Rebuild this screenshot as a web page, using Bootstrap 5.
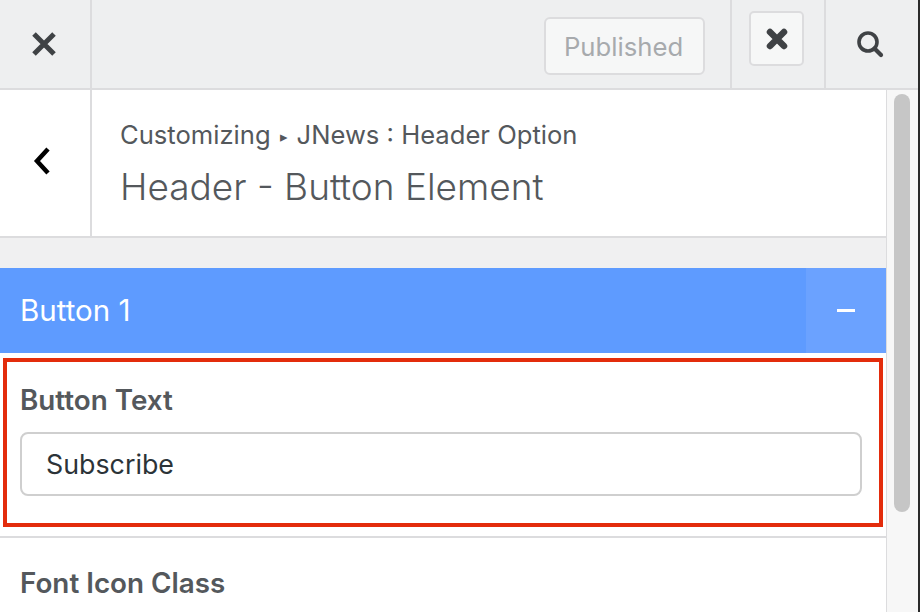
<!DOCTYPE html>
<html lang="en"><head><meta charset="utf-8">
<link href="https://cdn.jsdelivr.net/npm/bootstrap@5.3.0/dist/css/bootstrap.min.css" rel="stylesheet">
<style>
html,body{height:612px;overflow:hidden;}
body{font-family:Inter,"Liberation Sans",sans-serif;background:#f7f7f7;color:#50575e;}
.shell{width:918px;height:612px;border-right:2px solid #2a2a2a;box-sizing:content-box;}
.topbar{height:90px;background:#eeeff0;border-bottom:2px solid #dcdcde;}
.cell-close{width:92px;border-right:2px solid #dcdcde;padding-right:2px;}
.pub-btn{width:161px;height:58px;margin:4px 25px 0 0;background:#f6f7f7;border:2px solid #dcdcde;border-radius:6px;color:#a7aaad;font-size:25.7px;padding:3px 2px 0 0;}
.cell-x{width:96px;height:88px;border-left:2px solid #dcdcde;border-right:2px solid #dcdcde;padding:11px 0 0 17px;}
.x-btn{width:55px;height:55px;background:#f6f7f7;border:2px solid #dcdcde;border-radius:5px;}
.cell-search{width:92px;padding-right:5px;}
.scroll-main{width:887px;border-right:1px solid #dcdcde;}
.head-sec{height:148px;background:#fff;border-bottom:2px solid #dcdcde;}
.cell-back{width:92px;border-right:2px solid #dcdcde;padding:0 6px 4px 0;}
.head-text{padding:27px 0 0 28px;}
.crumb{font-size:25.6px;line-height:35px;color:#54585c;}
.crumb-arrow{font-size:15px;margin:0 9px 0 9px;vertical-align:2px;}
.panel-h{font-size:37px;font-weight:300;line-height:50px;color:#54585c;margin-top:8px;}
.gap-band{height:30px;background:#f0f0f1;}
.accord{height:85px;background:#5e9bff;color:#fff;}
.accord-title{font-size:29.5px;padding:0 0 0 20px;}
.accord-toggle{width:80px;background:#6ba2ff;}
.minus{width:18px;height:3px;background:#fff;}
.hl-wrap{background:#fff;padding:5px 3px 0 3px;height:185px;border-bottom:2px solid #dcdcde;}
.hl-box{width:880px;height:169px;border:4px solid #e32c0c;padding:20px 17px 0 14px;}
.fld-label{font-size:27.8px;font-weight:600;line-height:36px;color:#54585c;margin:0 0 14px;}
.fld-input{height:64px;font-size:26.8px;color:#2c3338;border:2px solid #cfcfcf;border-radius:8px;padding:0 24px;background:#fff;box-shadow:none;}
.hl-box .fld-label{margin-left:-1px;}
.hl-box .fld-input{margin-left:-1px;width:calc(100% + 1px);}
.next-fld{background:#fff;height:80px;padding:27px 20px 0;}
.track{width:31px;background:#f7f7f7;padding:4px 8px 0 7px;}
.thumb{width:16px;height:418px;background:#c6c6c6;border-radius:8px;}
</style></head>
<body>
<div class="shell d-flex flex-column">
<div class="topbar d-flex align-items-center">
 <div class="cell-close h-100 d-flex align-items-center justify-content-center">
  <svg width="26" height="26" viewBox="0 0 26 26"><path d="M3 3L23 23M23 3L3 23" stroke="#3f4245" stroke-width="5"/></svg>
 </div>
 <div class="flex-grow-1"></div>
 <button class="pub-btn d-flex align-items-center justify-content-center" type="button" disabled>Published</button>
 <div class="cell-x">
  <div class="x-btn d-flex align-items-center justify-content-center">
   <svg width="22" height="22" viewBox="0 0 22 22"><path d="M4 4L18 18M18 4L4 18" stroke="#3f4245" stroke-width="6.5" stroke-linecap="round"/></svg>
  </div>
 </div>
 <div class="cell-search h-100 d-flex align-items-center justify-content-center">
  <svg width="28" height="28" viewBox="0 0 28 28"><circle cx="12" cy="12" r="9" fill="none" stroke="#3f4245" stroke-width="3.6"/><path d="M18.5 18.5L25 25" stroke="#3f4245" stroke-width="4.2" stroke-linecap="round"/></svg>
 </div>
</div>
<div class="d-flex flex-grow-1 overflow-hidden">
 <div class="scroll-main">
  <div class="head-sec d-flex">
   <div class="cell-back d-flex align-items-center justify-content-center">
    <svg width="20" height="30" viewBox="0 0 20 30"><path d="M16 3L5 15L16 27" fill="none" stroke="#000" stroke-width="4.5"/></svg>
   </div>
   <div class="head-text">
    <div class="crumb">Customizing<span class="crumb-arrow">▸</span>JNews : Header Option</div>
    <div class="panel-h">Header - Button Element</div>
   </div>
  </div>
  <div class="gap-band"></div>
  <div class="accord d-flex align-items-stretch justify-content-between">
   <div class="accord-title d-flex align-items-center">Button 1</div>
   <div class="accord-toggle d-flex align-items-center justify-content-center"><div class="minus"></div></div>
  </div>
  <div class="hl-wrap">
   <div class="hl-box">
    <label class="fld-label d-block" for="bt">Button Text</label>
    <input id="bt" class="form-control fld-input" value="Subscribe">
   </div>
  </div>
  <div class="next-fld"><div class="fld-label">Font Icon Class</div></div>
 </div>
 <div class="track"><div class="thumb"></div></div>
</div>
</div>
</body></html>
